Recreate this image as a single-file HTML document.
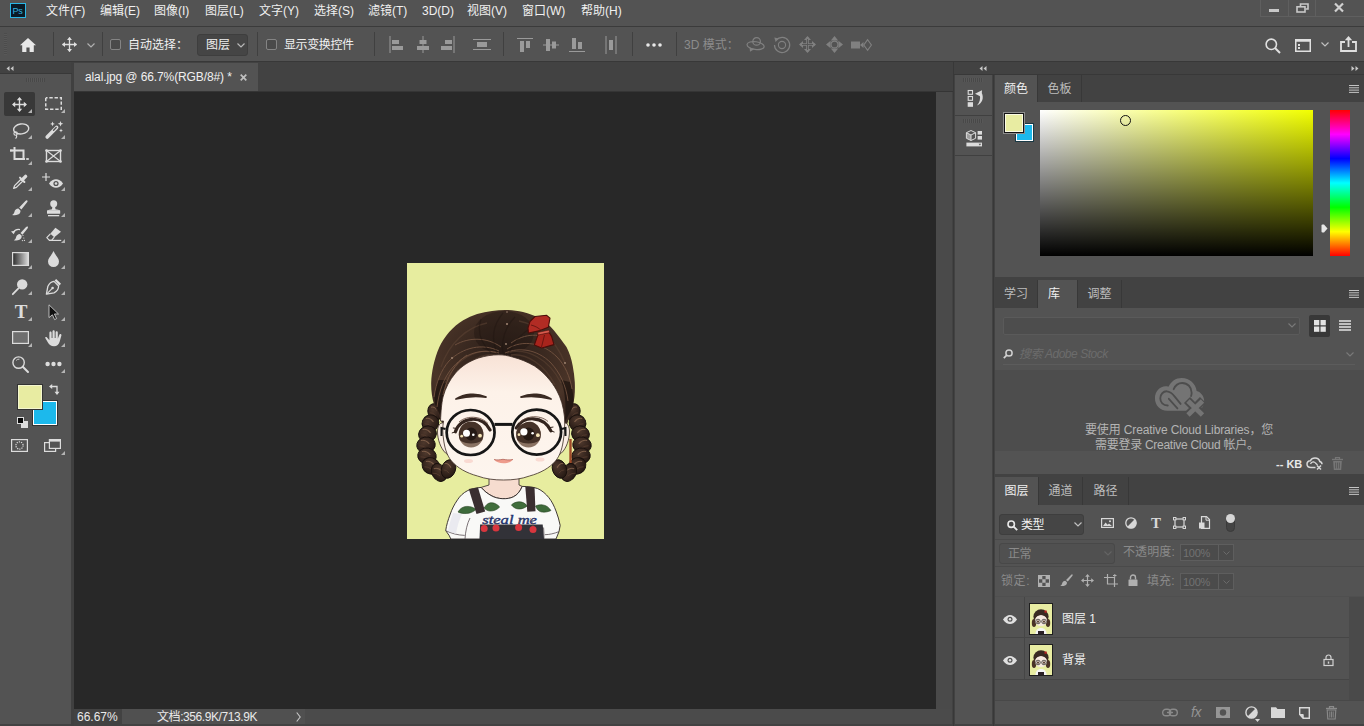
<!DOCTYPE html>
<html lang="zh">
<head>
<meta charset="utf-8">
<title>alal.jpg @ 66.7%(RGB/8#) *</title>
<style>
*{box-sizing:border-box;margin:0;padding:0}
html,body{width:1364px;height:726px;overflow:hidden;background:#424242}
body{position:relative;font-family:"Liberation Sans","Noto Sans CJK SC",sans-serif;font-size:12px;color:#e6e6e6;line-height:1}
.abs{position:absolute}
svg{position:absolute;overflow:visible}
/* menu bar */
#menubar{left:0;top:0;width:1364px;height:26px;background:#535353}
#menubar .mi{position:absolute;top:4px;font-size:12px;line-height:14px;color:#f0f0f0;white-space:nowrap}
#menuline{left:0;top:26px;width:1364px;height:1px;background:#3b3b3b}
/* options bar */
#optbar{left:0;top:27px;width:1364px;height:34px;background:#535353}
.vsep{position:absolute;width:1px;background:#404040}
.t12{position:absolute;font-size:12px;line-height:14px;white-space:nowrap}
/* tools */
#toolhead{left:0;top:62px;width:71px;height:12px;background:#424242}
#tools{left:0;top:74px;width:71px;height:650px;background:#535353}
/* doc area */
#tabbar{left:71px;top:62px;width:882px;height:30px;background:#424242;border-bottom:1px solid #353535}
#tab{left:74px;top:63px;width:184px;height:28px;background:#535353}
#canvas{left:74px;top:92px;width:862px;height:617px;background:#282828}
#vscroll{left:936px;top:92px;width:16px;height:617px;background:#4a4a4a}
#status{left:74px;top:709px;width:878px;height:15px;background:#4b4b4b}
/* right dock */
#dockhead{left:954px;top:62px;width:410px;height:12px;background:#424242}
#iconcol{left:955px;top:75px;width:37px;height:649px;background:#535353}
.panel{position:absolute;left:995px;width:369px;background:#535353}
.ptabs{position:absolute;left:995px;width:369px;height:27px;background:#424242}
.ptab{position:absolute;top:0;height:27px;font-size:12px;line-height:28px;text-align:center;color:#bdbdbd;border-right:1px solid #383838}
.ptab.on{background:#535353;color:#f0f0f0}
</style>
</head>
<body>
<!-- MENUBAR -->
<div id="menubar" class="abs">
<span class="mi" style="left:46px">文件(F)</span>
<span class="mi" style="left:100px">编辑(E)</span>
<span class="mi" style="left:154px">图像(I)</span>
<span class="mi" style="left:205px">图层(L)</span>
<span class="mi" style="left:259px">文字(Y)</span>
<span class="mi" style="left:314px">选择(S)</span>
<span class="mi" style="left:368px">滤镜(T)</span>
<span class="mi" style="left:422px">3D(D)</span>
<span class="mi" style="left:467px">视图(V)</span>
<span class="mi" style="left:522px">窗口(W)</span>
<span class="mi" style="left:581px">帮助(H)</span>
</div>

<!-- Ps logo -->
<div class="abs" style="left:10px;top:3px;width:16px;height:15px;background:#0a1a26;border:1px solid #2bb7e6"></div>
<span class="abs" style="left:12.500px;top:5.500px;font-size:9px;line-height:10px;color:#31b4e0;letter-spacing:-0.2px">Ps</span>
<!-- window controls -->
<div class="abs" style="left:1260px;top:0;width:104px;height:17px;border:1px solid #5f5f5f;border-top:0;border-right:0"></div>
<div class="abs" style="left:1288px;top:0;width:1px;height:16px;background:#5f5f5f"></div>
<div class="abs" style="left:1315px;top:0;width:1px;height:16px;background:#5f5f5f"></div>
<div class="abs" style="left:1269px;top:9px;width:10px;height:3px;background:#c8c8c8"></div>
<svg style="left:1296px;top:3px" width="13" height="10" viewBox="0 0 13 10"><path d="M4.5 3.5V1h7.5v5H9.5" fill="none" stroke="#c8c8c8" stroke-width="1.6"/><rect x="1" y="3.8" width="8" height="5.2" fill="none" stroke="#c8c8c8" stroke-width="1.6"/></svg>
<svg style="left:1334px;top:3px" width="10" height="9" viewBox="0 0 10 9"><path d="M1 0.5L9 8.5M9 0.5L1 8.5" stroke="#d0d0d0" stroke-width="2.2"/></svg>
<div id="menuline" class="abs"></div>
<!-- OPTIONS BAR -->
<div id="optbar" class="abs">
<!-- grip -->
<div class="abs" style="left:4px;top:6px;width:3px;height:22px;background:repeating-linear-gradient(#4c4c4c 0 1px,#585858 1px 2px)"></div>
<!-- home -->
<svg style="left:20px;top:11px" width="16" height="14" viewBox="0 0 16 14"><path d="M8 0L0 7.2h2.2V14h4.2V9.4h3.2V14h4.2V7.2H16z" fill="#e8e8e8"/></svg>
<div class="vsep" style="left:53px;top:5px;height:24px"></div>
<!-- move -->
<svg style="left:62px;top:10px" width="15" height="15" viewBox="0 0 15 15"><path d="M7.5 0.5v14M0.5 7.5h14" stroke="#e0e0e0" stroke-width="1.3" fill="none"/><path d="M7.5 0L5 3h5zM7.5 15L5 12h5zM0 7.5L3 5v5zM15 7.5L12 5v5z" fill="#e0e0e0"/></svg>
<svg style="left:87px;top:16px" width="8" height="5" viewBox="0 0 8 5"><path d="M0.5 0.5L4 4l3.5-3.5" fill="none" stroke="#b0b0b0" stroke-width="1.2"/></svg>
<div class="vsep" style="left:102px;top:5px;height:24px"></div>
<!-- checkbox 1 -->
<div class="abs" style="left:110px;top:12px;width:11px;height:11px;border:1px solid #848484;border-radius:2px;background:#4a4a4a"></div>
<span class="t12" style="left:128px;top:11px;color:#f0f0f0">自动选择：</span>
<!-- dropdown -->
<div class="abs" style="left:197px;top:7px;width:51px;height:22px;background:#454545;border:1px solid #3e3e3e;border-radius:3px"></div>
<span class="t12" style="left:206px;top:11px;color:#f0f0f0">图层</span>
<svg style="left:237px;top:16px" width="8" height="5" viewBox="0 0 8 5"><path d="M0.5 0.5L4 4l3.5-3.5" fill="none" stroke="#b8b8b8" stroke-width="1.2"/></svg>
<div class="vsep" style="left:257px;top:5px;height:24px"></div>
<!-- checkbox 2 -->
<div class="abs" style="left:266px;top:12px;width:11px;height:11px;border:1px solid #848484;border-radius:2px;background:#4a4a4a"></div>
<span class="t12" style="left:284px;top:11px;color:#f0f0f0;letter-spacing:-0.4px">显示变换控件</span>
<div class="vsep" style="left:374px;top:5px;height:24px"></div>
<!-- align icons -->
<svg style="left:389px;top:9px" width="16" height="18" viewBox="0 0 16 18"><path d="M1 0v17" stroke="#9a9a9a" stroke-width="1"/><rect x="3" y="4" width="7" height="4" fill="#9a9a9a"/><rect x="3" y="10" width="11" height="4" fill="#9a9a9a"/></svg>
<svg style="left:416px;top:9px" width="14" height="18" viewBox="0 0 14 18"><path d="M7 0v17" stroke="#9a9a9a" stroke-width="1"/><rect x="3.5" y="4" width="7" height="4" fill="#9a9a9a"/><rect x="1" y="10" width="12" height="4" fill="#9a9a9a"/></svg>
<svg style="left:440px;top:9px" width="16" height="18" viewBox="0 0 16 18"><path d="M14 0v17" stroke="#9a9a9a" stroke-width="1"/><rect x="5" y="4" width="7" height="4" fill="#9a9a9a"/><rect x="1" y="10" width="11" height="4" fill="#9a9a9a"/></svg>
<svg style="left:473px;top:12px" width="18" height="12" viewBox="0 0 18 12"><path d="M0 0.5h18M0 10.5h18" stroke="#9a9a9a" stroke-width="1"/><rect x="4" y="3" width="10" height="5" fill="#9a9a9a"/></svg>
<div class="vsep" style="left:503px;top:5px;height:24px"></div>
<svg style="left:517px;top:11px" width="16" height="15" viewBox="0 0 16 15"><path d="M0 0.5h16" stroke="#9a9a9a" stroke-width="1"/><rect x="3" y="3" width="4" height="11" fill="#9a9a9a"/><rect x="9" y="3" width="4" height="7" fill="#9a9a9a"/></svg>
<svg style="left:543px;top:11px" width="16" height="14" viewBox="0 0 16 14"><path d="M0 7h16" stroke="#9a9a9a" stroke-width="1"/><rect x="3" y="1" width="4" height="12" fill="#9a9a9a"/><rect x="9" y="3.5" width="4" height="7" fill="#9a9a9a"/></svg>
<svg style="left:569px;top:10px" width="16" height="15" viewBox="0 0 16 15"><path d="M0 14.5h16" stroke="#9a9a9a" stroke-width="1"/><rect x="3" y="1" width="4" height="11" fill="#9a9a9a"/><rect x="9" y="5" width="4" height="7" fill="#9a9a9a"/></svg>
<svg style="left:605px;top:9px" width="12" height="18" viewBox="0 0 12 18"><path d="M1 0v18M11 0v18" stroke="#9a9a9a" stroke-width="1"/><rect x="4" y="4" width="4" height="10" fill="#9a9a9a"/></svg>
<div class="vsep" style="left:632px;top:5px;height:24px"></div>
<svg style="left:646px;top:16px" width="16" height="4" viewBox="0 0 16 4"><circle cx="2" cy="2" r="1.8" fill="#e8e8e8"/><circle cx="8" cy="2" r="1.8" fill="#e8e8e8"/><circle cx="14" cy="2" r="1.8" fill="#e8e8e8"/></svg>
<div class="vsep" style="left:676px;top:5px;height:24px"></div>
<span class="t12" style="left:684px;top:11px;color:#8c8c8c">3D 模式：</span>
<!-- 3d icons -->
<svg style="left:746px;top:9px" width="20" height="17" viewBox="0 0 20 17"><circle cx="10.6" cy="5.4" r="3.8" fill="none" stroke="#808080" stroke-width="1.2"/><ellipse cx="9.6" cy="9.6" rx="8.6" ry="3.9" fill="none" stroke="#808080" stroke-width="1.2" transform="rotate(8 9.6 9.6)"/><path d="M3.6 11.4l5 1.6-4.600 2.800z" fill="#808080"/></svg>
<svg style="left:773px;top:9px" width="18" height="18" viewBox="0 0 18 18"><path d="M3.2 4.2A7.6 7.6 0 1 1 1.5 9" fill="none" stroke="#808080" stroke-width="1.2"/><path d="M1.3 1.5l4.5 1-3.2 3.4z" fill="#808080"/><circle cx="9" cy="9" r="3.6" fill="none" stroke="#808080" stroke-width="1.1"/></svg>
<svg style="left:799px;top:9px" width="17" height="17" viewBox="0 0 17 17"><path d="M8.5 1.5v14M1.5 8.5h14" stroke="#808080" stroke-width="2.6" fill="none"/><path d="M8.5 0L5 4h7zM8.5 17L5 13h7zM0 8.5L4 5v7zM17 8.5L13 5v7z" fill="#808080"/><path d="M8.5 3v11M3 8.5h11" stroke="#535353" stroke-width="0.9" fill="none"/></svg>
<svg style="left:825px;top:8px" width="19" height="19" viewBox="0 0 19 19"><circle cx="9.5" cy="9.5" r="3.4" fill="none" stroke="#808080" stroke-width="1.1"/><path d="M9.5 1L5.800 5.600h7.400zM9.500 18L5.800 13.400h7.400zM1 9.500L5.600 5.800v7.400zM18 9.500L13.400 5.800v7.400z" fill="#808080"/></svg>
<svg style="left:851px;top:11px" width="20" height="14" viewBox="0 0 20 14"><rect x="0" y="3.5" width="9" height="7" fill="#808080"/><path d="M9 7L12.5 4v6z" fill="#808080"/><path d="M16.600 1.600L12.800 7l3.800 5.400L20.400 7z" fill="none" stroke="#808080" stroke-width="1.1"/></svg>
<!-- right side -->
<svg style="left:1265px;top:11px" width="16" height="16" viewBox="0 0 16 16"><circle cx="6.3" cy="6.3" r="5.2" fill="none" stroke="#e0e0e0" stroke-width="1.6"/><path d="M10 10l5 5" stroke="#e0e0e0" stroke-width="2"/></svg>
<svg style="left:1295px;top:12px" width="16" height="13" viewBox="0 0 16 13"><rect x="0.75" y="0.75" width="14.5" height="11.5" fill="none" stroke="#e0e0e0" stroke-width="1.5"/><rect x="0.75" y="0.75" width="14.5" height="2" fill="#e0e0e0"/><rect x="3" y="5" width="2" height="2" fill="#e0e0e0"/><rect x="3" y="8" width="2" height="2" fill="#e0e0e0"/></svg>
<svg style="left:1321px;top:15px" width="8" height="5" viewBox="0 0 8 5"><path d="M0.5 0.5L4 4l3.5-3.5" fill="none" stroke="#c0c0c0" stroke-width="1.2"/></svg>
<svg style="left:1340px;top:9px" width="17" height="16" viewBox="0 0 17 16"><path d="M5 6H1v9h15V6h-4" fill="none" stroke="#e0e0e0" stroke-width="1.8"/><path d="M8.5 11V2.5" stroke="#e0e0e0" stroke-width="1.8"/><path d="M8.5 0L4.8 4.2h7.4z" fill="#e0e0e0"/></svg>
</div>
<!-- TOOLS -->
<div id="toolhead" class="abs"></div>
<svg style="left:6px;top:66px" width="8" height="5" viewBox="0 0 8 5"><path d="M3.500 0v5L0.500 2.500zM7.500 0v5L4.500 2.500z" fill="#c8c8c8"/></svg>
<div id="tools" class="abs"></div>
<div class="abs" style="left:26px;top:78px;width:19px;height:4px;background:repeating-linear-gradient(90deg,#484848 0 1px,#585858 1px 2px)"></div>
<div class="abs" style="left:4px;top:92px;width:31px;height:24px;background:#383838;border-radius:2px"></div>
<svg style="left:12px;top:97px" width="15" height="15" viewBox="0 0 15 15"><path d="M7.5 1v13M1 7.5h13" stroke="#dcdcdc" stroke-width="1.4" fill="none"/><path d="M7.5 0L4.8 3.2h5.4zM7.5 15L4.8 11.8h5.4zM0 7.5L3.2 4.8v5.4zM15 7.5L11.8 4.8v5.4z" fill="#dcdcdc"/></svg>
<svg style="left:28px;top:109px" width="4" height="4" viewBox="0 0 4 4"><path d="M4 0v4H0z" fill="#b4b4b4"/></svg>
<svg style="left:45px;top:97px" width="17" height="13" viewBox="0 0 17 13"><rect x="0.75" y="0.75" width="15.5" height="11.5" fill="none" stroke="#dcdcdc" stroke-width="1.5" stroke-dasharray="3.4 1.8" stroke-dashoffset="1.6"/></svg>
<svg style="left:61px;top:109px" width="4" height="4" viewBox="0 0 4 4"><path d="M4 0v4H0z" fill="#b4b4b4"/></svg>
<svg style="left:12px;top:123px" width="18" height="16" viewBox="0 0 18 16"><ellipse cx="9.2" cy="6" rx="7.6" ry="5" fill="none" stroke="#dcdcdc" stroke-width="1.4" transform="rotate(-8 9 6)"/><circle cx="3.6" cy="10.6" r="1.7" fill="none" stroke="#dcdcdc" stroke-width="1.1"/><path d="M4.2 12.2c.8 1 .4 2.4-.6 3.4" fill="none" stroke="#dcdcdc" stroke-width="1.1"/></svg>
<svg style="left:28px;top:135px" width="4" height="4" viewBox="0 0 4 4"><path d="M4 0v4H0z" fill="#b4b4b4"/></svg>
<svg style="left:45px;top:121px" width="18" height="18" viewBox="0 0 18 18"><path d="M2.2 16L11.6 6.4" stroke="#dcdcdc" stroke-width="3.6" stroke-linecap="round"/><path d="M8.6 9.2l2.6-2.6" stroke="#535353" stroke-width="1.4" stroke-linecap="round"/><path d="M7.5 0.5l.7 1.7 1.7.7-1.7.7-.7 1.7-.7-1.7-1.7-.7 1.7-.7zM15.5 0l.8 2 2 .8-2 .8-.8 2-.8-2-2-.8 2-.8zM16 7.5l.6 1.400 1.400.6-1.400.6-.6 1.400-.6-1.400-1.400-.6 1.400-.6z" fill="#dcdcdc"/></svg>
<svg style="left:61px;top:135px" width="4" height="4" viewBox="0 0 4 4"><path d="M4 0v4H0z" fill="#b4b4b4"/></svg>
<svg style="left:10px;top:147px" width="19" height="16" viewBox="0 0 19 16"><path d="M0 3.5h13.500v9.500" fill="none" stroke="#dcdcdc" stroke-width="2"/><path d="M4.500 0v12h10.500" fill="none" stroke="#dcdcdc" stroke-width="2"/><rect x="0" y="2.600" width="2.600" height="1.800" fill="#dcdcdc"/><rect x="16.200" y="11.100" width="2.600" height="1.800" fill="#dcdcdc"/></svg>
<svg style="left:28px;top:161px" width="4" height="4" viewBox="0 0 4 4"><path d="M4 0v4H0z" fill="#b4b4b4"/></svg>
<svg style="left:45px;top:149px" width="17" height="14" viewBox="0 0 17 14"><rect x="1.500" y="1.500" width="14" height="11" fill="none" stroke="#dcdcdc" stroke-width="1.400"/><path d="M1.500 1.500l14 11M15.500 1.500l-14 11" stroke="#dcdcdc" stroke-width="1.200"/><circle cx="1.500" cy="1.500" r="1.300" fill="#dcdcdc"/><circle cx="15.500" cy="1.500" r="1.300" fill="#dcdcdc"/><circle cx="1.500" cy="12.500" r="1.300" fill="#dcdcdc"/><circle cx="15.500" cy="12.500" r="1.300" fill="#dcdcdc"/></svg>
<svg style="left:12px;top:174px" width="16" height="16" viewBox="0 0 16 16"><path d="M1.600 14.400l1-2.800L9 5.200l1.800 1.800-6.400 6.400z" fill="none" stroke="#dcdcdc" stroke-width="1.300" stroke-linejoin="round"/><path d="M8 3.600l4.400 4.400" stroke="#dcdcdc" stroke-width="2" stroke-linecap="round"/><path d="M10.400 5.600L13.600 2.400" stroke="#dcdcdc" stroke-width="3.400" stroke-linecap="round"/></svg>
<svg style="left:28px;top:187px" width="4" height="4" viewBox="0 0 4 4"><path d="M4 0v4H0z" fill="#b4b4b4"/></svg>
<svg style="left:42px;top:173px" width="21" height="16" viewBox="0 0 21 16"><path d="M4 0v8M0 4h8" stroke="#dcdcdc" stroke-width="1.200"/><path d="M7 10.500c2-3 4.500-4.200 7-4.200s5 1.200 7 4.200c-2 3-4.500 4.200-7 4.200s-5-1.200-7-4.200z" fill="#dcdcdc"/><circle cx="14" cy="10.500" r="2.600" fill="#535353"/><circle cx="14" cy="10.500" r="1.300" fill="#dcdcdc"/></svg>
<svg style="left:61px;top:187px" width="4" height="4" viewBox="0 0 4 4"><path d="M4 0v4H0z" fill="#b4b4b4"/></svg>
<svg style="left:12px;top:200px" width="16" height="16" viewBox="0 0 16 16"><path d="M15.200 0.400c.6.400.5 1-.1 1.800L9.400 9.400 7.200 7.600 13.400 1c.7-.7 1.300-1 1.800-.6z" fill="#dcdcdc"/><path d="M6.400 8.600l2 1.800c.4 1.600-.6 3.400-2.400 4.200-1.800.8-4 .8-6 .4 1.400-.6 2-1.400 2.400-3 .4-1.800 2-3.400 4-3.400z" fill="#dcdcdc"/></svg>
<svg style="left:28px;top:213px" width="4" height="4" viewBox="0 0 4 4"><path d="M4 0v4H0z" fill="#b4b4b4"/></svg>
<svg style="left:47px;top:200px" width="14" height="17" viewBox="0 0 14 17"><circle cx="6.700" cy="3.800" r="3.500" fill="#dcdcdc"/><path d="M5.400 6h2.600l.5 3.200c2 .2 3.600.6 4.800 1.200H0.200c1.200-.6 2.800-1 4.800-1.200z" fill="#dcdcdc"/><rect x="0" y="10.300" width="13.200" height="3.500" rx="0.600" fill="#dcdcdc"/><rect x="1" y="15" width="11.200" height="1.300" fill="#dcdcdc"/></svg>
<svg style="left:61px;top:213px" width="4" height="4" viewBox="0 0 4 4"><path d="M4 0v4H0z" fill="#b4b4b4"/></svg>
<svg style="left:11px;top:226px" width="18" height="17" viewBox="0 0 18 17"><path d="M16.600 0.600c.6.400.5 1-.1 1.800l-5 6.400-2-1.800L14.800 1.200c.7-.7 1.300-1 1.800-.6z" fill="#dcdcdc"/><path d="M8.800 8l1.800 1.600c.4 1.600-.4 3.400-2.200 4.200-1.600.8-3.800.8-5.600.4 1.200-.6 1.800-1.400 2.200-2.800.4-1.800 2-3.400 3.800-3.400z" fill="#dcdcdc"/><path d="M2.500 6.200C4 3.800 6.400 3 9 3.600" fill="none" stroke="#dcdcdc" stroke-width="1.200"/><path d="M0 5.400l4.400-.8-1.600 3.600z" fill="#dcdcdc"/><path d="M12 9.500l.01 0M12.800 12l.01 0M13.400 14.400l.01 0M11.400 14.600l.01 0" stroke="#dcdcdc" stroke-width="1.200" stroke-linecap="round"/></svg>
<svg style="left:28px;top:239px" width="4" height="4" viewBox="0 0 4 4"><path d="M4 0v4H0z" fill="#b4b4b4"/></svg>
<svg style="left:46px;top:227px" width="17" height="15" viewBox="0 0 17 15"><path d="M9.4 0.7L15 4.7 8.300 10.200 4.300 6.800z" fill="#dcdcdc"/><path d="M4.400 6.800L0.800 10.600 3.400 13.300H5.600L8.300 10.100" fill="none" stroke="#dcdcdc" stroke-width="1.200" stroke-linejoin="round"/><path d="M3 13.400h12.200" stroke="#dcdcdc" stroke-width="1.200"/></svg>
<svg style="left:61px;top:239px" width="4" height="4" viewBox="0 0 4 4"><path d="M4 0v4H0z" fill="#b4b4b4"/></svg>
<svg style="left:12px;top:252px" width="17" height="14" viewBox="0 0 17 14"><defs><linearGradient id="gtool" x1="0" x2="1" y1="0" y2="0"><stop offset="0" stop-color="#2a2a2a"/><stop offset="1" stop-color="#dcdcdc"/></linearGradient></defs><rect x="0.600" y="0.600" width="15.800" height="12.800" fill="url(#gtool)" stroke="#dcdcdc" stroke-width="1.200"/></svg>
<svg style="left:28px;top:265px" width="4" height="4" viewBox="0 0 4 4"><path d="M4 0v4H0z" fill="#b4b4b4"/></svg>
<svg style="left:48px;top:251px" width="11" height="16" viewBox="0 0 11 16"><path d="M5.500 0C7 4 11 7 11 10.500a5.500 5.500 0 0 1-11 0C0 7 4 4 5.500 0z" fill="#dcdcdc"/></svg>
<svg style="left:61px;top:265px" width="4" height="4" viewBox="0 0 4 4"><path d="M4 0v4H0z" fill="#b4b4b4"/></svg>
<svg style="left:12px;top:279px" width="16" height="16" viewBox="0 0 16 16"><circle cx="10.200" cy="5.400" r="5.200" fill="#dcdcdc"/><path d="M6.400 9.400L0.800 15.200" stroke="#dcdcdc" stroke-width="1.800" stroke-linecap="round"/></svg>
<svg style="left:28px;top:291px" width="4" height="4" viewBox="0 0 4 4"><path d="M4 0v4H0z" fill="#b4b4b4"/></svg>
<svg style="left:45px;top:278px" width="17" height="17" viewBox="0 0 17 17"><path d="M11.200 1l4.800 4.800-1.600 1.600-4.800-4.800z" fill="#dcdcdc"/><path d="M9 3.400l4.600 4.600c0 3-1.600 5.400-4.600 6.800L1.400 16.200 2.800 8.600C4.200 5.600 6 3.600 9 3.400z" fill="none" stroke="#dcdcdc" stroke-width="1.300" stroke-linejoin="round"/><path d="M1.800 15.800l5.200-5.200" stroke="#dcdcdc" stroke-width="1.100"/><circle cx="7.600" cy="10" r="1.300" fill="#dcdcdc"/></svg>
<svg style="left:61px;top:291px" width="4" height="4" viewBox="0 0 4 4"><path d="M4 0v4H0z" fill="#b4b4b4"/></svg>
<span class="abs" style="left:13px;top:301px;width:16px;text-align:center;font-family:'Liberation Serif',serif;font-weight:bold;font-size:19px;line-height:22px;color:#dcdcdc">T</span>
<svg style="left:28px;top:317px" width="4" height="4" viewBox="0 0 4 4"><path d="M4 0v4H0z" fill="#b4b4b4"/></svg>
<svg style="left:48px;top:304px" width="12" height="16" viewBox="0 0 12 16"><path d="M1 0.800L10.500 10H6.400l2.200 4.600-2 1-2.200-4.800L1 13.600z" fill="#111" stroke="#c8c8c8" stroke-width="0.900" stroke-linejoin="round"/></svg>
<svg style="left:61px;top:317px" width="4" height="4" viewBox="0 0 4 4"><path d="M4 0v4H0z" fill="#b4b4b4"/></svg>
<svg style="left:12px;top:331px" width="17" height="13" viewBox="0 0 17 13"><rect x="0.600" y="0.600" width="15.800" height="11.800" fill="#6e6e6e" stroke="#dcdcdc" stroke-width="1.200"/></svg>
<svg style="left:28px;top:343px" width="4" height="4" viewBox="0 0 4 4"><path d="M4 0v4H0z" fill="#b4b4b4"/></svg>
<svg style="left:45px;top:330px" width="17" height="17" viewBox="0 0 17 17"><path d="M0.400 8.200C-0.200 7.200 1 6.500 1.800 7.300L4.400 10.200V2.800C4.400 1.200 6.600 1.200 6.600 2.800V8H7.500V1.400C7.500 -0.200 9.700 -0.200 9.700 1.400V8H10.600V2.400C10.600 0.800 12.800 0.800 12.800 2.400V8.800L14.300 4.800C14.900 3.400 16.900 4.200 16.400 5.600L14.700 11.500C13.900 14.500 12 16.200 9 16.200 6 16.200 4.400 14.800 3.200 13z" fill="#dcdcdc"/></svg>
<svg style="left:61px;top:343px" width="4" height="4" viewBox="0 0 4 4"><path d="M4 0v4H0z" fill="#b4b4b4"/></svg>
<svg style="left:12px;top:356px" width="17" height="17" viewBox="0 0 17 17"><circle cx="6.600" cy="6.600" r="5.700" fill="none" stroke="#dcdcdc" stroke-width="1.400"/><path d="M10.800 10.800l5.200 5.200" stroke="#dcdcdc" stroke-width="2" stroke-linecap="round"/><path d="M4.200 4.400A3.400 3.400 0 0 1 7.400 3.200" fill="none" stroke="#dcdcdc" stroke-width="0.900"/></svg>
<svg style="left:45px;top:361px" width="17" height="6" viewBox="0 0 17 6"><circle cx="2.600" cy="3" r="2.200" fill="#dcdcdc"/><circle cx="8.500" cy="3" r="2.200" fill="#dcdcdc"/><circle cx="14.400" cy="3" r="2.200" fill="#dcdcdc"/></svg>
<svg style="left:61px;top:369px" width="4" height="4" viewBox="0 0 4 4"><path d="M4 0v4H0z" fill="#b4b4b4"/></svg>
<div class="abs" style="left:33px;top:401px;width:24px;height:24px;background:#1cb9ec;border:1px solid #fff;box-shadow:0 0 0 1px #333"></div>
<div class="abs" style="left:18px;top:385px;width:24px;height:24px;background:#e8eca2;border:1px solid #f4f6cf;box-shadow:0 0 0 1px #333"></div>
<svg style="left:49px;top:384px" width="11" height="11" viewBox="0 0 11 11"><path d="M2.500 2.500h5.500v5.500" fill="none" stroke="#dcdcdc" stroke-width="1.300"/><path d="M0 2.500L3.200 0v5zM8 11L5.500 7.800h5z" fill="#dcdcdc"/></svg>
<div class="abs" style="left:21px;top:421px;width:7px;height:7px;background:#dcdcdc"></div><div class="abs" style="left:17px;top:417px;width:7px;height:7px;background:#0a0a0a;border:1px solid #dcdcdc"></div>
<svg style="left:11px;top:439px" width="17" height="13" viewBox="0 0 17 13"><rect x="0.600" y="0.600" width="15.800" height="11.800" fill="none" stroke="#dcdcdc" stroke-width="1.200"/><circle cx="8.500" cy="6.500" r="3.600" fill="none" stroke="#dcdcdc" stroke-width="1.200" stroke-dasharray="1.2 1.06" stroke-width="1.4"/></svg>
<svg style="left:44px;top:439px" width="17" height="13" viewBox="0 0 17 13"><rect x="0.600" y="3.600" width="11" height="8.800" fill="#535353" stroke="#dcdcdc" stroke-width="1.200"/><rect x="5.400" y="0.600" width="11" height="8.800" fill="#535353" stroke="#dcdcdc" stroke-width="1.200"/><rect x="5.400" y="0.600" width="11" height="2" fill="#dcdcdc"/></svg>
<svg style="left:61px;top:451px" width="4" height="4" viewBox="0 0 4 4"><path d="M4 0v4H0z" fill="#b4b4b4"/></svg>
<!-- DOC -->
<div id="tabbar" class="abs"></div>
<div id="tab" class="abs"></div>
<span class="t12" style="left:85px;top:70px;color:#f0f0f0;letter-spacing:-0.11px" id="tabtxt">alal.jpg @ 66.7%(RGB/8#) *</span>
<svg style="left:240px;top:74px" width="7" height="7" viewBox="0 0 7 7"><path d="M0.700 0.700l5.600 5.600M6.300 0.700L0.700 6.300" stroke="#c0c0c0" stroke-width="1.700"/></svg>
<div id="canvas" class="abs"></div>
<div id="vscroll" class="abs"></div>
<svg id="girl" style="left:407px;top:263px" width="197" height="276" viewBox="0 0 197 276">
<defs>
<radialGradient id="hairg" cx="0.5" cy="0.42" r="0.62"><stop offset="0" stop-color="#2a1d18"/><stop offset="0.45" stop-color="#3a2920"/><stop offset="0.8" stop-color="#4a3428"/><stop offset="1" stop-color="#3a2820"/></radialGradient>
<linearGradient id="faceg" x1="0" x2="0" y1="0" y2="1"><stop offset="0" stop-color="#f8e2d6"/><stop offset="0.3" stop-color="#fdf2e9"/><stop offset="1" stop-color="#fdf5ee"/></linearGradient>
<radialGradient id="irisg" cx="0.5" cy="0.35" r="0.7"><stop offset="0" stop-color="#3a2a22"/><stop offset="0.55" stop-color="#6a5446"/><stop offset="1" stop-color="#9a8472"/></radialGradient>
<linearGradient id="braidg" x1="0" x2="1" y1="0" y2="0"><stop offset="0" stop-color="#4a3428"/><stop offset="0.5" stop-color="#2e201a"/><stop offset="1" stop-color="#4a3226"/></linearGradient>
<radialGradient id="knotg" cx="0.4" cy="0.35" r="0.75"><stop offset="0" stop-color="#4e382c"/><stop offset="0.6" stop-color="#33231c"/><stop offset="1" stop-color="#20150f"/></radialGradient>
<clipPath id="imgclip"><rect x="0" y="0" width="197" height="276"/></clipPath>
</defs>
<g clip-path="url(#imgclip)">
<rect x="0" y="0" width="197" height="276" fill="#e7ed9f"/>
<!-- braids -->
<g id="braidL">
<ellipse cx="28" cy="149" rx="7" ry="8.5" transform="rotate(-20 28 149)" fill="url(#knotg)" stroke="#170f0c" stroke-width="0.900"/>
<path d="M24.1 144.3Q27.3 142.8 30.4 147.7" fill="none" stroke="#8a6850" stroke-width="1.100" opacity=".8"/>
<path d="M23.1 149.8Q25.9 149.3 28.7 152.8" fill="none" stroke="#5e4232" stroke-width="0.900" opacity=".8"/>
<ellipse cx="23.5" cy="160" rx="8.5" ry="8" transform="rotate(-25 23.5 160)" fill="url(#knotg)" stroke="#170f0c" stroke-width="0.900"/>
<path d="M18.8 155.6Q22.6 154.1 26.5 158.8" fill="none" stroke="#8a6850" stroke-width="1.100" opacity=".8"/>
<path d="M17.6 160.8Q21.0 160.3 24.4 163.6" fill="none" stroke="#5e4232" stroke-width="0.900" opacity=".8"/>
<ellipse cx="20.5" cy="171" rx="9" ry="8" transform="rotate(-20 20.5 171)" fill="url(#knotg)" stroke="#170f0c" stroke-width="0.900"/>
<path d="M15.6 166.6Q19.6 165.1 23.6 169.8" fill="none" stroke="#8a6850" stroke-width="1.100" opacity=".8"/>
<path d="M14.2 171.8Q17.8 171.3 21.4 174.6" fill="none" stroke="#5e4232" stroke-width="0.900" opacity=".8"/>
<ellipse cx="19" cy="182" rx="9.3" ry="8" transform="rotate(-10 19 182)" fill="url(#knotg)" stroke="#170f0c" stroke-width="0.900"/>
<path d="M13.9 177.6Q18.1 176.1 22.3 180.8" fill="none" stroke="#8a6850" stroke-width="1.100" opacity=".8"/>
<path d="M12.5 182.8Q16.2 182.3 19.9 185.6" fill="none" stroke="#5e4232" stroke-width="0.900" opacity=".8"/>
<ellipse cx="20" cy="193" rx="9.3" ry="8" transform="rotate(10 20 193)" fill="url(#knotg)" stroke="#170f0c" stroke-width="0.900"/>
<path d="M14.9 188.6Q19.1 187.1 23.3 191.8" fill="none" stroke="#8a6850" stroke-width="1.100" opacity=".8"/>
<path d="M13.5 193.8Q17.2 193.3 20.9 196.6" fill="none" stroke="#5e4232" stroke-width="0.900" opacity=".8"/>
<ellipse cx="24" cy="203" rx="9.3" ry="8" transform="rotate(30 24 203)" fill="url(#knotg)" stroke="#170f0c" stroke-width="0.900"/>
<path d="M18.9 198.6Q23.1 197.1 27.3 201.8" fill="none" stroke="#8a6850" stroke-width="1.100" opacity=".8"/>
<path d="M17.5 203.8Q21.2 203.3 24.9 206.6" fill="none" stroke="#5e4232" stroke-width="0.900" opacity=".8"/>
<ellipse cx="32" cy="209.5" rx="9.5" ry="7" transform="rotate(60 32 209.5)" fill="url(#knotg)" stroke="#170f0c" stroke-width="0.900"/>
<path d="M26.8 205.7Q31.1 204.2 35.3 208.4" fill="none" stroke="#8a6850" stroke-width="1.100" opacity=".8"/>
<path d="M25.4 210.2Q29.2 209.7 33.0 212.7" fill="none" stroke="#5e4232" stroke-width="0.900" opacity=".8"/>
<ellipse cx="41.5" cy="206" rx="7" ry="9.5" transform="rotate(20 41.5 206)" fill="url(#knotg)" stroke="#170f0c" stroke-width="0.900"/>
<path d="M37.6 200.8Q40.8 199.3 44.0 204.6" fill="none" stroke="#8a6850" stroke-width="1.100" opacity=".8"/>
<path d="M36.6 206.9Q39.4 206.4 42.2 210.3" fill="none" stroke="#5e4232" stroke-width="0.900" opacity=".8"/>
</g>
<g id="braidR">
<ellipse cx="166" cy="149" rx="7" ry="8.5" transform="rotate(20 166 149)" fill="url(#knotg)" stroke="#170f0c" stroke-width="0.900"/>
<path d="M169.8 144.3Q166.7 142.8 163.6 147.7" fill="none" stroke="#8a6850" stroke-width="1.100" opacity=".8"/>
<path d="M170.9 149.8Q168.1 149.3 165.3 152.8" fill="none" stroke="#5e4232" stroke-width="0.900" opacity=".8"/>
<ellipse cx="170.5" cy="160" rx="8.5" ry="8" transform="rotate(25 170.5 160)" fill="url(#knotg)" stroke="#170f0c" stroke-width="0.900"/>
<path d="M175.2 155.6Q171.4 154.1 167.5 158.8" fill="none" stroke="#8a6850" stroke-width="1.100" opacity=".8"/>
<path d="M176.4 160.8Q173.1 160.3 169.7 163.6" fill="none" stroke="#5e4232" stroke-width="0.900" opacity=".8"/>
<ellipse cx="173.5" cy="171" rx="9" ry="8" transform="rotate(20 173.5 171)" fill="url(#knotg)" stroke="#170f0c" stroke-width="0.900"/>
<path d="M178.4 166.6Q174.4 165.1 170.3 169.8" fill="none" stroke="#8a6850" stroke-width="1.100" opacity=".8"/>
<path d="M179.8 171.8Q176.2 171.3 172.6 174.6" fill="none" stroke="#5e4232" stroke-width="0.900" opacity=".8"/>
<ellipse cx="175" cy="182" rx="9.3" ry="8" transform="rotate(10 175 182)" fill="url(#knotg)" stroke="#170f0c" stroke-width="0.900"/>
<path d="M180.1 177.6Q175.9 176.1 171.7 180.8" fill="none" stroke="#8a6850" stroke-width="1.100" opacity=".8"/>
<path d="M181.5 182.8Q177.8 182.3 174.1 185.6" fill="none" stroke="#5e4232" stroke-width="0.900" opacity=".8"/>
<ellipse cx="174" cy="193" rx="9.3" ry="8" transform="rotate(-10 174 193)" fill="url(#knotg)" stroke="#170f0c" stroke-width="0.900"/>
<path d="M179.1 188.6Q174.9 187.1 170.7 191.8" fill="none" stroke="#8a6850" stroke-width="1.100" opacity=".8"/>
<path d="M180.5 193.8Q176.8 193.3 173.1 196.6" fill="none" stroke="#5e4232" stroke-width="0.900" opacity=".8"/>
<ellipse cx="170" cy="203" rx="9.3" ry="8" transform="rotate(-30 170 203)" fill="url(#knotg)" stroke="#170f0c" stroke-width="0.900"/>
<path d="M175.1 198.6Q170.9 197.1 166.7 201.8" fill="none" stroke="#8a6850" stroke-width="1.100" opacity=".8"/>
<path d="M176.5 203.8Q172.8 203.3 169.1 206.6" fill="none" stroke="#5e4232" stroke-width="0.900" opacity=".8"/>
<ellipse cx="162" cy="209.5" rx="9.5" ry="7" transform="rotate(-60 162 209.5)" fill="url(#knotg)" stroke="#170f0c" stroke-width="0.900"/>
<path d="M167.2 205.7Q162.9 204.2 158.7 208.4" fill="none" stroke="#8a6850" stroke-width="1.100" opacity=".8"/>
<path d="M168.7 210.2Q164.9 209.7 161.1 212.7" fill="none" stroke="#5e4232" stroke-width="0.900" opacity=".8"/>
<ellipse cx="152.5" cy="206" rx="7" ry="9.5" transform="rotate(-20 152.5 206)" fill="url(#knotg)" stroke="#170f0c" stroke-width="0.900"/>
<path d="M156.3 200.8Q153.2 199.3 150.1 204.6" fill="none" stroke="#8a6850" stroke-width="1.100" opacity=".8"/>
<path d="M157.4 206.9Q154.6 206.4 151.8 210.3" fill="none" stroke="#5e4232" stroke-width="0.900" opacity=".8"/>
<path d="M163.500 176v24" stroke="#a04a28" stroke-width="2.400"/>
</g>
<!-- hair dome -->
<path d="M24.200 119.200C24.500 110 27 96 32.400 84.100 37 74 46 63 56.200 57.200 65 52 75 49 85 48c5-.8 10-1.200 14.600-1.100 6 .1 11 .8 16.400 2.100 6 1.500 11.500 3.500 16.600 6.200 5.500 3 10.500 7.500 14.400 12.400 4.500 5.500 8.500 11 12.500 16.500 3 6 5 12 6.200 18.600 1 5.500 1.800 11 2.100 16.500.3 8 0 16-2 24l-6 19H36l-9-21c-2-7-3-14-2.800-22z" fill="url(#hairg)"/>
<path d="M40 117c-3 8-4.500 18-4.500 28 0 6 .5 11 1.500 16l-9-20c-1-8 0-16 3-24z" fill="#1c130f" opacity=".75"/>
<path d="M154 117c3 8 4.500 18 4.500 28 0 6-.5 11-1.500 16l9-18c1-8 0-16-3-24z" fill="#1c130f" opacity=".75"/>
<ellipse cx="97" cy="70" rx="30" ry="22" fill="#1a120e" opacity=".35"/>
<g fill="none" stroke="#5e4434" stroke-width="1.300" opacity=".55">
<path d="M90 90C70 84 48 96 38 120"/><path d="M88 92C72 90 54 102 46 124"/><path d="M100 90c20-6 42 6 54 30"/><path d="M104 92c16-2 34 10 44 30"/><path d="M80 60c-20 4-38 20-46 44"/><path d="M112 58c20 4 36 18 46 42"/>
</g>
<!-- hair strands -->
<g fill="none" stroke="#7a5844" stroke-width="1" opacity=".8">
<path d="M92 90C78 86 60 88 46 104c-9 10-14 24-16 40"/><path d="M92 88C76 80 56 84 42 98c-8 9-13 22-15 36"/><path d="M94 84c-14-10-32-10-46-2"/><path d="M60 92c-12 8-20 22-24 40"/>
<path d="M98 90c14-6 32-4 46 10 9 10 15 22 17 38"/><path d="M100 86c16-10 36-6 50 8 8 8 13 20 15 32"/><path d="M104 80c14-10 30-10 42-2"/>
</g>
<g fill="none" stroke="#1e1410" stroke-width="1.200" opacity=".4">
<path d="M90 90c-6-14-4-28 6-40"/><path d="M96 90c-2-12 2-26 12-36"/><path d="M84 90c-10-10-14-22-10-34"/><path d="M102 90c4-10 12-20 24-26"/>
</g>
<g fill="#b89a84" opacity=".85"><circle cx="100" cy="61" r="1"/><circle cx="99" cy="81" r="0.900"/><circle cx="45" cy="95" r="0.900"/><circle cx="158" cy="100" r="0.900"/><circle cx="100" cy="49" r="0.800"/></g>
<!-- ears -->
<path d="M39 161c-5.500-3.500-9.200 1.500-8.400 10 .8 8.500 4.400 17 9.900 20.500z" fill="#fbeee4" stroke="#3a2a22" stroke-width="0.800"/>
<path d="M154 161c5.500-3.500 9.200 1.500 8.400 10-.8 8.500-4.400 17-9.900 20.500z" fill="#fbeee4" stroke="#3a2a22" stroke-width="0.800"/>
<!-- neck -->
<path d="M82 210h30v12l3.200 1.400c-2 5-5 8.500-8.800 10.400-3.200 1.600-6.800 2-10.700 1.900-4-.2-8-1-11.700-3.200-3.500-2-6.800-4.500-9.900-8.100L82 222z" fill="#f6dccf" stroke="#2e2626" stroke-width="0.800"/>
<!-- face -->
<path d="M36.500 158c-1 6-1 12 0 18 1 8 3 16 8 22 6 7 15 12 26 15 8 3 17 4 26 4s18-1 26-4c11-3 20-8 26-15 5-6 7-14 8-22 1-6 1.500-14 1-22-1-10-3.500-19-8-27-5-9-13-18-22-24-7-4-14-7-22-9-5-1.500-9-2.200-14-2.200-6 0-13 1-20 3.200-9 3-17 8-23 15-6 7-10 15-12.500 24-1.500 7-2 14-2.500 24z" fill="url(#faceg)" stroke="#3a2a22" stroke-width="0.800"/>
<!-- blush -->
<ellipse cx="61.500" cy="198" rx="4.500" ry="2" fill="#f6cfc6" opacity=".7"/><ellipse cx="133" cy="196.500" rx="4.500" ry="2" fill="#f6cfc6" opacity=".7"/>
<!-- eyebrows -->
<path d="M49 136c8-5 20-6.500 30-2-10-1.500-21-0.500-30 2z" fill="#3a2a22" stroke="#3a2a22" stroke-width="1.800" stroke-linejoin="round"/>
<path d="M144 136c-8-5-20-6.500-30-2 10-1.500 21-0.500 30 2z" fill="#3a2a22" stroke="#3a2a22" stroke-width="1.800" stroke-linejoin="round"/>
<!-- eyes -->
<g id="eyeL">
<ellipse cx="64.100" cy="171.500" rx="12.300" ry="13" fill="#8a7262"/>
<path d="M51.800 171.500a12.300 13 0 0 1 24.600 0c0 2-.4 4-1.200 5.800-3 2.200-7 3.200-11.100 3.200s-8.100-1-11.100-3.200c-.8-1.800-1.200-3.800-1.200-5.800z" fill="#453228"/>
<ellipse cx="64.100" cy="171" rx="6" ry="6.500" fill="#241914"/>
<path d="M46 158h38v9c-3-5-9-8.500-19-8.500-8 0-14 4-17 10z" fill="#fdf3ea"/>
<path d="M48.400 168.800c2-6.500 8-12 16.400-12.500 8-.4 14.500 3.600 18.300 10.600" fill="none" stroke="#33241e" stroke-width="3.200" stroke-linecap="round"/>
<path d="M52 159c4-3.500 10-5.500 17-4.500 5 .7 9 3 12 6" fill="none" stroke="#6a5044" stroke-width="0.900"/>
<path d="M48.400 168.800l-3.600 1.200M49.500 165.500l-3.600-.6" stroke="#33241e" stroke-width="1"/>
<circle cx="59.500" cy="170.300" r="3.500" fill="#fff"/><circle cx="66.300" cy="171.700" r="1.300" fill="#fff"/><circle cx="73" cy="172.700" r="1.900" fill="#f6e6b8"/><circle cx="54.700" cy="173.200" r="1.400" fill="#f6e6b8"/>
</g>
<g id="eyeR">
<ellipse cx="121.500" cy="171.500" rx="12.300" ry="13" fill="#8a7262"/>
<path d="M109.200 171.500a12.300 13 0 0 1 24.600 0c0 2-.4 4-1.200 5.800-3 2.200-7 3.200-11.100 3.200s-8.100-1-11.100-3.200c-.8-1.800-1.200-3.800-1.200-5.800z" fill="#453228"/>
<ellipse cx="121.500" cy="171" rx="6" ry="6.500" fill="#241914"/>
<path d="M102 158h44v10c-3-6-9-10-17.500-10-10 0-16 3.500-19 8.500z" fill="#fdf3ea"/>
<path d="M109.200 165c3.800-6 10-9.600 17-9.200 8.400.5 14.700 5.600 17.700 12.100" fill="none" stroke="#33241e" stroke-width="3.200" stroke-linecap="round"/>
<path d="M112 160c3-3 7-5.300 12-6 7-1 13 1 17 4.500" fill="none" stroke="#6a5044" stroke-width="0.900"/>
<path d="M143.900 167.900l3.600 1.200M142.800 164.600l3.600-.6" stroke="#33241e" stroke-width="1"/>
<circle cx="116.900" cy="168.800" r="3.600" fill="#fff"/><circle cx="125.600" cy="170.300" r="1.300" fill="#fff"/><circle cx="130.900" cy="172.200" r="1.900" fill="#f6e6b8"/><circle cx="112" cy="171.700" r="1.400" fill="#f6e6b8"/>
</g>
<!-- glasses -->
<ellipse cx="63.600" cy="169.500" rx="23.950" ry="22.500" fill="none" stroke="#161616" stroke-width="2.700"/>
<ellipse cx="129.700" cy="169.100" rx="24.400" ry="22.500" fill="none" stroke="#161616" stroke-width="2.700"/>
<path d="M87.500 161.400h18" stroke="#161616" stroke-width="3"/>
<path d="M38.500 166l-4-1v8" fill="none" stroke="#161616" stroke-width="2"/><path d="M154.500 166l4-1v8" fill="none" stroke="#161616" stroke-width="2"/>
<!-- mouth -->
<path d="M87 196.500c3 .8 6 .2 9-.2 3 .4 6 1 10 .2-2 2.600-5.500 3.800-9.500 3.800S89 199 87 196.500z" fill="#ee9c8c"/>
<path d="M87 196.500c3 .8 6 .2 9-.2 3 .4 6 1 10 .2" fill="none" stroke="#a8584c" stroke-width="0.700"/>
<!-- bow -->
<path d="M123 58.500L128 53.500 139.700 52.300 143 55.200 141.300 64.300 133 67.600 121.500 70 121 65z" fill="#b22c24" stroke="#4a0e0a" stroke-width="1.100" stroke-linejoin="round"/>
<path d="M131.400 70.900L142 69.200 144.600 73.400 147 81.600 134.700 85 127.300 82 129.800 75z" fill="#a8241c" stroke="#4a0e0a" stroke-width="1.100" stroke-linejoin="round"/>
<path d="M124 62c4 1 8 3 10 5.500M134.500 84l3-12" fill="none" stroke="#5a120e" stroke-width="0.800"/>
<path d="M130.500 69.500l11.500-2.500.8 2.600-11.600 2.400z" fill="#d85a4c" stroke="#4a0e0a" stroke-width="0.600"/>
<!-- shirt -->
<path d="M74 224.400C68 225 64 226 60.800 227.500 56 230 53 233 50.500 236.800 47 242 45 246 43.300 251 41 257 39.500 262 38.700 267.600l3.600 5.100 1.500 3.300h105.200l3-7.400 1.200-6.200c-1-5-2.400-9.800-4.200-14.400-1.800-4.800-4-9.400-7.100-13.300-3-3.800-6.600-7-11.300-9.200-4.600-1.400-9.800-2-15.400-2.100-2 5-5 8.500-8.800 10.400-3.200 1.600-6.800 2-10.700 1.900-4-.2-8-1-11.700-3.200-3.500-2-6.800-4.500-9.900-8.100z" fill="#f9f9f7" stroke="#2e2626" stroke-width="0.900" stroke-linejoin="round"/>
<path d="M38.700 267.600c6 3 12 4.500 19 4.800M152 268.600c-5 2-9.500 3-14.200 3.100M58 276c.5-8 2-15 5-21M137 276c0-4-.2-8-.4-11.500" fill="none" stroke="#5a5056" stroke-width="0.800"/>
<path d="M46 250c-2 6-4 12-5 18l8 3c1-7 3-14 6-20z" fill="#e6e6ee" opacity=".8"/>
<!-- leaves -->
<path d="M51 249c2-3.500 5-5.400 8.800-5.600 3.600-.2 6.800 1 9.200 3.100-2.600 2.400-6 3.800-9.600 4-3.200.2-6-.3-8.400-1.500z" fill="#3d6a3a" stroke="#24401f" stroke-width="0.600"/>
<path d="M77.200 245c1.600-3 3.600-4.800 6.200-5.200 3.600-.5 6.800 1.400 9.200 4.200-2.400 2.600-5.600 4-9.200 4-2.400 0-4.500-1-6.200-3z" fill="#416e3c" stroke="#24401f" stroke-width="0.600"/>
<path d="M104.400 241.900c2.200-2 4.800-3 7.700-3.100 3.200-.1 6 1.400 8.200 4.100-2.400 2-5.200 3.100-8.300 3.100-2.900 0-5.500-1.400-7.600-4.100z" fill="#416e3c" stroke="#24401f" stroke-width="0.600"/>
<path d="M128.500 243c2.200-1 4.600-1.400 7.200-1.100 3.400.4 6.200 2.400 8.200 5.600-2.800 1.400-5.900 1.900-9.200 1.500-2.400-.3-4.600-2.200-6.200-6z" fill="#3d6a3a" stroke="#24401f" stroke-width="0.600"/>
<!-- straps -->
<path d="M61.800 226l9.200-1.600 7.200 24.200-8.700 2.400z" fill="#3a2e30"/>
<path d="M118.300 223.500l9.200.4 1 24.300-8.200.6z" fill="#3a2e30"/>
<!-- text on shirt -->
<text x="75.200" y="261" font-family="Liberation Serif,serif" font-style="italic" font-weight="normal" font-size="11.500" fill="#1f336e" stroke="#1f336e" stroke-width="0.350" textLength="54.800" lengthAdjust="spacingAndGlyphs">steal me</text>
<!-- bib -->
<path d="M73.100 261.400h62.600l1.300 14.600H72.500z" fill="#323238"/>
<circle cx="77.200" cy="265.500" r="3.500" fill="#d8363e"/><circle cx="89" cy="265" r="3.500" fill="#d8363e"/><circle cx="111.600" cy="264.500" r="3.500" fill="#d8363e"/><circle cx="126" cy="266.500" r="3.500" fill="#d8363e"/>
<path d="M77.200 262c1-4 3-7 6-8M89 261.500c0-3-1-5-3-7M111.600 261c1-3 3-5 5-6M126 263c0-3-1-6-3-8" fill="none" stroke="#8a6a50" stroke-width="0.600"/>
</g>
</svg>
<div id="status" class="abs"></div>
<div class="abs" style="left:74px;top:709px;width:48px;height:15px;background:#424242"></div>
<div class="abs" style="left:122px;top:709px;width:183px;height:15px;background:#505050"></div>
<span class="t12" style="left:77px;top:710px;color:#eaeaea" id="zoomtxt">66.67%</span>
<span class="t12" style="left:157px;top:710px;color:#eaeaea;letter-spacing:-0.42px" id="doctxt">文档:356.9K/713.9K</span>
<svg style="left:296px;top:712px" width="5" height="10" viewBox="0 0 5 10"><path d="M0.700 0.500L4.200 5 0.700 9.500" fill="none" stroke="#c8c8c8" stroke-width="1.100"/></svg>
<!-- DOCK -->
<div id="dockhead" class="abs"></div>
<svg style="left:979px;top:66px" width="8" height="5" viewBox="0 0 8 5"><path d="M3.500 0v5L0.500 2.500zM7.500 0v5L4.500 2.500z" fill="#c8c8c8"/></svg>
<svg style="left:1351px;top:66px" width="8" height="5" viewBox="0 0 8 5"><path d="M0.500 0v5L3.500 2.500zM4.500 0v5L7.500 2.500z" fill="#c8c8c8"/></svg>
<div id="iconcol" class="abs"></div>
<div class="abs" style="left:963px;top:78px;width:20px;height:4px;background:repeating-linear-gradient(90deg,#484848 0 1px,#585858 1px 2px)"></div>
<!-- history icon -->
<svg style="left:967px;top:90px" width="17" height="17" viewBox="0 0 17 17"><rect x="1.200" y="0.500" width="4.300" height="3.800" fill="none" stroke="#dcdcdc" stroke-width="1.100"/><rect x="1.200" y="6.500" width="4.300" height="3.800" fill="none" stroke="#dcdcdc" stroke-width="1.100"/><rect x="0.700" y="12.200" width="5.300" height="4.600" fill="#dcdcdc"/><path d="M8 3.800L15 0.200 14.600 7z" fill="#dcdcdc"/><path d="M14.800 3C17 8 15.500 13 10 15.600 12.800 12.400 13.600 8.600 12.800 5z" fill="#dcdcdc"/></svg>
<div class="abs" style="left:955px;top:115px;width:37px;height:1px;background:#404040"></div>
<div class="abs" style="left:963px;top:119px;width:20px;height:4px;background:repeating-linear-gradient(90deg,#484848 0 1px,#585858 1px 2px)"></div>
<!-- 3d props icon -->
<svg style="left:966px;top:130px" width="17" height="17" viewBox="0 0 17 17"><path d="M5 0.500L9.600 2.700V8.300L5 10.500 0.400 8.300V2.700z" fill="none" stroke="#dcdcdc" stroke-width="1"/><path d="M0.400 2.700L5 5l4.600-2.300M5 5v5.500" fill="none" stroke="#dcdcdc" stroke-width="1"/><path d="M0.400 2.700L5 5v5.500L0.400 8.300z" fill="#dcdcdc" opacity=".55"/><rect x="11.600" y="1" width="4.400" height="3.600" fill="#dcdcdc"/><rect x="11.600" y="6" width="4.400" height="3.600" fill="#dcdcdc"/><rect x="0.400" y="12.600" width="15.600" height="3.800" fill="#dcdcdc"/><path d="M12.600 13.800h2.600l-1.300 1.800z" fill="#535353"/></svg>
<div class="abs" style="left:955px;top:155px;width:37px;height:1px;background:#404040"></div>
<!-- COLOR PANEL -->
<div class="ptabs" style="top:75px"><div class="ptab on" style="left:0;width:43px">颜色</div><div class="ptab" style="left:43px;width:44px">色板</div></div>
<svg style="left:1349px;top:85px" width="10" height="8" viewBox="0 0 10 8"><path d="M0 0.500h10M0 2.800h10M0 5.100h10M0 7.400h10" stroke="#c4c4c4" stroke-width="1"/></svg>
<div class="panel" style="top:102px;height:175px"></div>
<div class="abs" style="left:1015px;top:123px;width:19px;height:19px;background:#1cb9ec;box-shadow:inset 0 0 0 1px #1a3a46,inset 0 0 0 2px #fff"></div>
<div class="abs" style="left:1003px;top:112px;width:22px;height:22px;background:#e8eca2;box-shadow:inset 0 0 0 1px #8e8e8e,inset 0 0 0 2px #151515,inset 0 0 0 3px #fbfbe4"></div>
<div class="abs" style="left:1040px;top:110px;width:273px;height:146px;background:linear-gradient(to bottom,rgba(0,0,0,0),#000),linear-gradient(to right,#fff,#f2ff00)"></div>
<div class="abs" style="left:1120px;top:115px;width:11px;height:11px;border:1.300px solid #111;border-radius:50%"></div>
<div class="abs" style="left:1330px;top:110px;width:20px;height:146px;background:linear-gradient(to bottom,#f00 0%,#f0f 16.660%,#00f 33.330%,#0ff 50%,#0f0 66.660%,#ff0 83.330%,#f00 100%)"></div>
<svg style="left:1321px;top:224px" width="7" height="9" viewBox="0 0 7 9"><path d="M0.500 1.500Q0.500 0.500 1.500 0.500H3L6.500 4.500 3 8.500H1.500Q0.500 8.500 0.500 7.500z" fill="#e8e8e8"/></svg>
<div class="abs" style="left:0;top:61px;width:1364px;height:1px;background:#383838"></div>
<div class="abs" style="left:953px;top:62px;width:1px;height:664px;background:#383838"></div>
<div class="abs" style="left:993px;top:74px;width:1px;height:652px;background:#383838"></div>
<div class="abs" style="left:953px;top:74px;width:411px;height:1px;background:#383838"></div>
<div class="abs" style="left:71px;top:62px;width:3px;height:664px;background:#404040"></div>
<div class="abs" style="left:0;top:73px;width:72px;height:1px;background:#383838"></div>
<!-- LIBRARIES PANEL -->
<div class="ptabs" style="top:280px;height:28px"><div class="ptab" style="left:0;width:43px;height:28px">学习</div><div class="ptab on" style="left:43px;width:40px;height:28px;text-align:left;padding-left:10px">库</div><div class="ptab" style="left:83px;width:44px;height:28px">调整</div></div>
<svg style="left:1349px;top:290px" width="10" height="8" viewBox="0 0 10 8"><path d="M0 0.500h10M0 2.800h10M0 5.100h10M0 7.400h10" stroke="#c4c4c4" stroke-width="1"/></svg>
<div class="panel" style="top:308px;height:166px"></div>
<div class="abs" style="left:1003px;top:317px;width:297px;height:18px;background:#4d4d4d;border:1px solid #5a5a5a;border-radius:2px"></div>
<svg style="left:1288px;top:323px" width="8" height="5" viewBox="0 0 8 5"><path d="M0.500 0.500L4 4l3.500-3.500" fill="none" stroke="#7a7a7a" stroke-width="1.100"/></svg>
<div class="abs" style="left:1309px;top:315px;width:21px;height:22px;background:#383838;border-radius:2px"></div>
<svg style="left:1314px;top:320px" width="12" height="12" viewBox="0 0 12 12"><rect x="0" y="0" width="5.300" height="5.300" fill="#e4e4e4"/><rect x="6.500" y="0" width="5.300" height="5.300" fill="#e4e4e4"/><rect x="0" y="6.500" width="5.300" height="5.300" fill="#e4e4e4"/><rect x="6.500" y="6.500" width="5.300" height="5.300" fill="#e4e4e4"/></svg>
<svg style="left:1339px;top:320px" width="12" height="11" viewBox="0 0 12 11"><path d="M0 1h12M0 4h12M0 7h12M0 10h12" stroke="#e4e4e4" stroke-width="1.700"/></svg>
<svg style="left:1003px;top:349px" width="10" height="10" viewBox="0 0 10 10"><circle cx="6" cy="4" r="3.100" fill="none" stroke="#d0d0d0" stroke-width="1.500"/><path d="M3.800 6.200L0.800 9.200" stroke="#d0d0d0" stroke-width="1.700"/></svg>
<span class="t12" style="left:1019px;top:347px;color:#6c6c6c;font-style:italic;letter-spacing:-0.47px" id="stocktxt">搜索 Adobe Stock</span>
<svg style="left:1346px;top:352px" width="8" height="5" viewBox="0 0 8 5"><path d="M0.500 0.500L4 4l3.500-3.500" fill="none" stroke="#7a7a7a" stroke-width="1.100"/></svg>
<div class="abs" style="left:1003px;top:364px;width:352px;height:1px;background:#5c5c5c"></div>
<div class="abs" style="left:995px;top:370px;width:369px;height:81px;background:#4d4d4d"></div>
<!-- cloud icon -->
<svg style="left:1155px;top:378px" width="50" height="38" viewBox="0 0 50 38"><g transform="translate(-2.200,-1.800) scale(1.070,1.130)"><path d="M13.500 30.500C6.500 30.500 2 25.500 2 19.500 2 13.500 6.500 9 12 9c1 0 1.800.1 2.600.3C17 4.500 21.500 1.500 27 1.500c7.500 0 13 5 14 11.500 4 1 7 4.600 7 9 0 2-.6 3.800-1.600 5.400L40 30.500z" fill="#747474"/><path d="M14 26C9.500 26 7 23 7 19.500 7 16 9.800 13.200 13.200 13.400c3.400.2 5.300 2.200 7.300 4.600l5.500 6.500" fill="none" stroke="#4d4d4d" stroke-width="1.700" stroke-linecap="round"/><path d="M19.500 11.500C21 8 24 6 27.500 6c5 0 8.800 3.800 8.800 8.600 0 1-.2 2-.5 2.900" fill="none" stroke="#4d4d4d" stroke-width="1.700" stroke-linecap="round"/><path d="M15 20l8 8.500" stroke="#4d4d4d" stroke-width="1.700" stroke-linecap="round"/></g><path d="M32 22l16 16M48 22L32 38" stroke="#4d4d4d" stroke-width="8.500"/><path d="M33 23l14.500 14M47.500 23L33 37" stroke="#747474" stroke-width="4.800"/></svg>
<span class="t12" style="left:1085px;top:423px;color:#b4b4b4;letter-spacing:-0.13px" id="lib1">要使用 Creative Cloud Libraries，您</span>
<span class="t12" style="left:1095px;top:438px;color:#b4b4b4;letter-spacing:-0.28px" id="lib2">需要登录 Creative Cloud 帐户。</span>
<div class="abs" style="left:995px;top:451px;width:369px;height:23px;background:#535353"></div>
<span class="t12" style="left:1276px;top:457px;color:#e8e8e8;font-weight:bold;font-size:11px" id="kbtxt">-- KB</span>
<svg style="left:1306px;top:457px" width="16" height="13" viewBox="0 0 16 13"><path d="M5 10.500C2.500 10.500 1 9 1 7c0-2 1.600-3.400 3.400-3.200C5.200 2 7 1 9 1c2.500 0 4.300 1.500 4.800 3.500 1.400.3 2.200 1.300 2.200 2.700" fill="none" stroke="#d8d8d8" stroke-width="1.500"/><path d="M5 10.500h4.500" stroke="#d8d8d8" stroke-width="1.500"/><path d="M4.500 7c.5-1.500 2-2.400 3.500-2 .9.300 1.500.8 2 1.500L11.500 8" fill="none" stroke="#d8d8d8" stroke-width="1.300"/><path d="M11 8.500l4 4M15 8.500l-4 4" stroke="#d8d8d8" stroke-width="1.500"/></svg>
<svg style="left:1332px;top:457px" width="11" height="13" viewBox="0 0 11 13"><path d="M0 2.500h11" stroke="#767676" stroke-width="1.400"/><path d="M3.500 2V0.600h4V2" fill="none" stroke="#767676" stroke-width="1.200"/><path d="M1.200 4h8.600l-.6 9H1.800z" fill="#767676"/><path d="M3.600 5.500v6M5.500 5.500v6M7.400 5.500v6" stroke="#535353" stroke-width="0.800"/></svg>
<!-- LAYERS PANEL -->
<div class="ptabs" style="top:477px;height:28px"><div class="ptab on" style="left:0;width:44px;height:28px">图层</div><div class="ptab" style="left:44px;width:44px;height:28px">通道</div><div class="ptab" style="left:88px;width:46px;height:28px">路径</div></div>
<svg style="left:1349px;top:487px" width="10" height="8" viewBox="0 0 10 8"><path d="M0 0.500h10M0 2.800h10M0 5.100h10M0 7.400h10" stroke="#c4c4c4" stroke-width="1"/></svg>
<div class="panel" style="top:505px;height:219px"></div>
<!-- filter row -->
<div class="abs" style="left:999px;top:514px;width:85px;height:21px;background:#454545;border:1px solid #3e3e3e;border-radius:3px"></div>
<svg style="left:1007px;top:520px" width="11" height="11" viewBox="0 0 11 11"><circle cx="4.200" cy="4.200" r="3.200" fill="none" stroke="#e8e8e8" stroke-width="1.600"/><path d="M6.600 6.600l3.600 3.600" stroke="#e8e8e8" stroke-width="1.900"/></svg>
<span class="t12" style="left:1021px;top:518px;color:#f0f0f0;letter-spacing:-0.5px">类型</span>
<svg style="left:1074px;top:522px" width="8" height="5" viewBox="0 0 8 5"><path d="M0.500 0.500L4 4l3.500-3.500" fill="none" stroke="#c0c0c0" stroke-width="1.200"/></svg>
<svg style="left:1101px;top:518px" width="13" height="10" viewBox="0 0 13 10"><rect x="0.600" y="0.600" width="11.800" height="8.800" fill="none" stroke="#d8d8d8" stroke-width="1.200"/><path d="M2 8l2.600-3.400 2 2.200 1.400-1.200L11 8z" fill="#d8d8d8"/><circle cx="9" cy="3.200" r="1" fill="#d8d8d8"/></svg>
<svg style="left:1125px;top:517px" width="12" height="12" viewBox="0 0 12 12"><circle cx="6" cy="6" r="5.200" fill="none" stroke="#d8d8d8" stroke-width="1.300"/><path d="M2.300 9.700A5.200 5.200 0 0 0 9.700 2.300z" fill="#d8d8d8"/></svg>
<span class="abs" style="left:1150px;top:513px;width:12px;text-align:center;font-family:'Liberation Serif',serif;font-weight:bold;font-size:15px;line-height:20px;color:#d8d8d8">T</span>
<svg style="left:1173px;top:517px" width="13" height="12" viewBox="0 0 13 12"><rect x="2" y="2" width="9" height="8" fill="none" stroke="#d8d8d8" stroke-width="1.200"/><rect x="0" y="0" width="3.400" height="3.400" fill="#d8d8d8"/><rect x="9.600" y="0" width="3.400" height="3.400" fill="#d8d8d8"/><rect x="0" y="8.600" width="3.400" height="3.400" fill="#d8d8d8"/><rect x="9.600" y="8.600" width="3.400" height="3.400" fill="#d8d8d8"/><rect x="1" y="1" width="1.400" height="1.400" fill="#535353"/><rect x="10.600" y="1" width="1.400" height="1.400" fill="#535353"/><rect x="1" y="9.600" width="1.400" height="1.400" fill="#535353"/><rect x="10.600" y="9.600" width="1.400" height="1.400" fill="#535353"/></svg>
<svg style="left:1199px;top:516px" width="11" height="13" viewBox="0 0 11 13"><path d="M2.500 0.600h5l3 3v8.800h-8z" fill="none" stroke="#d8d8d8" stroke-width="1.200"/><path d="M7 0.600v3.600h3.400" fill="none" stroke="#d8d8d8" stroke-width="1"/><rect x="0" y="6.500" width="5.500" height="6" fill="#d8d8d8"/></svg>
<div class="abs" style="left:1226px;top:515px;width:9px;height:17px;border-radius:4.500px;background:#444;border:1px solid #3a3a3a"></div>
<div class="abs" style="left:1226px;top:514px;width:9px;height:9px;border-radius:50%;background:#d6d6d6"></div>
<div class="abs" style="left:995px;top:539px;width:369px;height:1px;background:#4a4a4a"></div>
<!-- blend row -->
<div class="abs" style="left:999px;top:543px;width:116px;height:21px;background:#505050;border:1px solid #484848;border-radius:3px"></div>
<span class="t12" style="left:1008px;top:547px;color:#8a8a8a;letter-spacing:-0.6px">正常</span>
<svg style="left:1104px;top:551px" width="8" height="5" viewBox="0 0 8 5"><path d="M0.500 0.500L4 4l3.500-3.500" fill="none" stroke="#646464" stroke-width="1.100"/></svg>
<span class="t12" style="left:1123px;top:545px;color:#8a8a8a;letter-spacing:0.1px" id="optxt">不透明度:</span>
<div class="abs" style="left:1180px;top:544px;width:39px;height:17px;background:#4b4b4b;border:1px solid #5e5e5e"></div>
<span class="t12" style="left:1183px;top:546px;color:#727272;font-size:11px;letter-spacing:-0.3px">100%</span>
<div class="abs" style="left:1218px;top:544px;width:16px;height:17px;background:#4b4b4b;border:1px solid #5e5e5e"></div>
<svg style="left:1223px;top:551px" width="7" height="4" viewBox="0 0 7 4"><path d="M0.500 0.500L3.500 3.500 6.500 0.500" fill="none" stroke="#6a6a6a" stroke-width="1"/></svg>
<div class="abs" style="left:995px;top:566px;width:369px;height:1px;background:#4a4a4a"></div>
<!-- lock row -->
<span class="t12" style="left:1001px;top:574px;color:#8a8a8a;letter-spacing:0.6px" id="locktxt">锁定:</span>
<svg style="left:1038px;top:575px" width="12" height="12" viewBox="0 0 12 12"><rect x="0.500" y="0.500" width="11" height="11" fill="none" stroke="#b0b0b0" stroke-width="1"/><path d="M1 1h3.300v3.300H1zM7.600 1H11v3.300H7.600zM4.300 4.300h3.300v3.400H4.300zM1 7.700h3.300V11H1zM7.600 7.700H11V11H7.600z" fill="#b0b0b0"/></svg>
<svg style="left:1060px;top:574px" width="13" height="13" viewBox="0 0 13 13"><path d="M12.400 0.400c.5.400.4.900-.1 1.500L7.800 7.400 6 5.900 11 .9c.5-.6 1-.8 1.400-.5z" fill="#b0b0b0"/><path d="M5.300 6.800l1.600 1.400c.3 1.300-.5 2.800-1.900 3.400-1.500.6-3.200.6-4.800.3 1.100-.5 1.600-1.100 1.900-2.400.3-1.500 1.600-2.700 3.200-2.700z" fill="#b0b0b0"/></svg>
<svg style="left:1081px;top:574px" width="13" height="13" viewBox="0 0 13 13"><path d="M6.500 1v11M1 6.500h11" stroke="#b0b0b0" stroke-width="1.200" fill="none"/><path d="M6.500 0L4.200 2.800h4.600zM6.500 13L4.200 10.200h4.600zM0 6.500L2.800 4.200v4.600zM13 6.500L10.200 4.200v4.600z" fill="#b0b0b0"/></svg>
<svg style="left:1104px;top:574px" width="14" height="13" viewBox="0 0 14 13"><path d="M0 3.500h10.500v9.500" fill="none" stroke="#b0b0b0" stroke-width="1.200"/><path d="M3.500 0v10h10.500" fill="none" stroke="#b0b0b0" stroke-width="1.200"/><path d="M9 1.500h3.500M10.800 0v3.200" stroke="#b0b0b0" stroke-width="1"/></svg>
<svg style="left:1128px;top:574px" width="10" height="12" viewBox="0 0 10 12"><path d="M2.500 5.500V3.500a2.500 2.500 0 0 1 5 0v2" fill="none" stroke="#b0b0b0" stroke-width="1.400"/><rect x="0.500" y="5.500" width="9" height="6.500" rx="0.600" fill="#b0b0b0"/></svg>
<span class="t12" style="left:1147px;top:574px;color:#8a8a8a;letter-spacing:0.1px" id="filltxt">填充:</span>
<div class="abs" style="left:1180px;top:573px;width:39px;height:17px;background:#4b4b4b;border:1px solid #5e5e5e"></div>
<span class="t12" style="left:1183px;top:575px;color:#727272;font-size:11px;letter-spacing:-0.3px">100%</span>
<div class="abs" style="left:1218px;top:573px;width:16px;height:17px;background:#4b4b4b;border:1px solid #5e5e5e"></div>
<svg style="left:1223px;top:580px" width="7" height="4" viewBox="0 0 7 4"><path d="M0.500 0.500L3.500 3.500 6.500 0.500" fill="none" stroke="#6a6a6a" stroke-width="1"/></svg>
<!-- layer list -->
<div class="abs" style="left:995px;top:596px;width:369px;height:104px;background:#4f4f4f"></div>
<div class="abs" style="left:995px;top:597px;width:354px;height:40px;background:#535353"></div>
<div class="abs" style="left:995px;top:638px;width:354px;height:41px;background:#535353"></div>
<div class="abs" style="left:995px;top:637px;width:354px;height:1px;background:#464646"></div>
<div class="abs" style="left:995px;top:679px;width:354px;height:1px;background:#464646"></div>
<div class="abs" style="left:1024px;top:597px;width:1px;height:82px;background:#464646"></div>
<div class="abs" style="left:1349px;top:597px;width:15px;height:103px;background:#4a4a4a"></div>
<svg style="left:1003px;top:615px" width="14" height="9" viewBox="0 0 14 9"><path d="M0 4.500C2 1.500 4.500 0 7 0s5 1.500 7 4.500C12 7.500 9.500 9 7 9S2 7.500 0 4.500z" fill="#e0e0e0"/><circle cx="7" cy="4.300" r="2.500" fill="#535353"/><circle cx="7" cy="4.300" r="1.200" fill="#e0e0e0"/></svg>
<svg style="left:1003px;top:656px" width="14" height="9" viewBox="0 0 14 9"><path d="M0 4.500C2 1.500 4.500 0 7 0s5 1.500 7 4.500C12 7.500 9.500 9 7 9S2 7.500 0 4.500z" fill="#e0e0e0"/><circle cx="7" cy="4.300" r="2.500" fill="#535353"/><circle cx="7" cy="4.300" r="1.200" fill="#e0e0e0"/></svg>
<svg style="left:1029px;top:603px" width="24" height="32" viewBox="0 0 24 32"><rect x="0" y="0" width="24" height="32" fill="#1e1e1e"/><rect x="1" y="1" width="22" height="30" fill="#e8eca2"/><ellipse cx="12" cy="13.500" rx="7.600" ry="7.200" fill="#3a2a22"/><ellipse cx="5" cy="20" rx="2.200" ry="4" fill="#4a3226"/><ellipse cx="19" cy="20" rx="2.200" ry="4" fill="#4a3226"/><ellipse cx="12" cy="17.500" rx="6" ry="5.600" fill="#f7e9e0"/><path d="M6 15c1-4 4-5.500 6-5.500s5 1.500 6 5.500c-2-2.500-4-3-6-3s-4 .5-6 3z" fill="#3a2a22"/><circle cx="9" cy="18.500" r="2.300" fill="#e8d8d0" stroke="#222" stroke-width="0.700"/><circle cx="15" cy="18.500" r="2.300" fill="#e8d8d0" stroke="#222" stroke-width="0.700"/><circle cx="9" cy="18.700" r="1.100" fill="#5a4436"/><circle cx="15" cy="18.700" r="1.100" fill="#5a4436"/><path d="M6.500 31c0-4 2.500-6 5.500-6s5.500 2 5.500 6z" fill="#f4f4f4"/><rect x="9" y="28" width="6" height="3" fill="#2a2024"/><rect x="15.500" y="7.500" width="2.200" height="2.200" fill="#b22"/></svg>
<svg style="left:1029px;top:644px" width="24" height="32" viewBox="0 0 24 32"><rect x="0" y="0" width="24" height="32" fill="#1e1e1e"/><rect x="1" y="1" width="22" height="30" fill="#e8eca2"/><ellipse cx="12" cy="13.500" rx="7.600" ry="7.200" fill="#3a2a22"/><ellipse cx="5" cy="20" rx="2.200" ry="4" fill="#4a3226"/><ellipse cx="19" cy="20" rx="2.200" ry="4" fill="#4a3226"/><ellipse cx="12" cy="17.500" rx="6" ry="5.600" fill="#f7e9e0"/><path d="M6 15c1-4 4-5.500 6-5.500s5 1.500 6 5.500c-2-2.500-4-3-6-3s-4 .5-6 3z" fill="#3a2a22"/><circle cx="9" cy="18.500" r="2.300" fill="#e8d8d0" stroke="#222" stroke-width="0.700"/><circle cx="15" cy="18.500" r="2.300" fill="#e8d8d0" stroke="#222" stroke-width="0.700"/><circle cx="9" cy="18.700" r="1.100" fill="#5a4436"/><circle cx="15" cy="18.700" r="1.100" fill="#5a4436"/><path d="M6.500 31c0-4 2.500-6 5.500-6s5.500 2 5.500 6z" fill="#f4f4f4"/><rect x="9" y="28" width="6" height="3" fill="#2a2024"/><rect x="15.500" y="7.500" width="2.200" height="2.200" fill="#b22"/></svg>
<span class="t12" style="left:1062px;top:612px;color:#f0f0f0" id="l1txt">图层 1</span>
<span class="t12" style="left:1062px;top:653px;color:#f0f0f0">背景</span>
<svg style="left:1323px;top:654px" width="11" height="12" viewBox="0 0 11 12"><path d="M3 5.500V3.500a2.500 2.500 0 0 1 5 0v2" fill="none" stroke="#d0d0d0" stroke-width="1.200"/><rect x="1" y="5.500" width="9" height="6" fill="none" stroke="#d0d0d0" stroke-width="1.200"/><rect x="4.800" y="7.500" width="1.400" height="2.200" fill="#d0d0d0"/></svg>
<!-- footer -->
<div class="abs" style="left:995px;top:700px;width:369px;height:1px;background:#484848"></div>
<svg style="left:1162px;top:708px" width="16" height="9" viewBox="0 0 16 9"><rect x="0.700" y="1.200" width="8" height="6.600" rx="3.300" fill="none" stroke="#8a8a8a" stroke-width="1.400"/><rect x="7.300" y="1.200" width="8" height="6.600" rx="3.300" fill="none" stroke="#8a8a8a" stroke-width="1.400"/><path d="M5 4.500h6" stroke="#8a8a8a" stroke-width="1.400"/></svg>
<span class="abs" style="left:1191px;top:704px;font-style:italic;font-size:14px;line-height:16px;color:#929292;font-family:'Liberation Sans',sans-serif;font-weight:normal;letter-spacing:-0.5px">fx</span>
<svg style="left:1216px;top:707px" width="14" height="11" viewBox="0 0 14 11"><rect x="0" y="0" width="14" height="11" fill="#969696"/><circle cx="7" cy="5.500" r="3.200" fill="#535353"/></svg>
<svg style="left:1245px;top:706px" width="13" height="13" viewBox="0 0 13 13"><circle cx="6.500" cy="6.500" r="5.600" fill="none" stroke="#d8d8d8" stroke-width="1.400"/><path d="M2.500 10.500A5.600 5.600 0 0 0 10.500 2.500z" fill="#d8d8d8"/></svg>
<svg style="left:1255px;top:719px" width="5" height="3" viewBox="0 0 5 3"><path d="M0 0h5L2.500 3z" fill="#d8d8d8"/></svg>
<svg style="left:1271px;top:706px" width="14" height="12" viewBox="0 0 14 12"><path d="M0 1.200h5l1.500 1.800H14V12H0z" fill="#d8d8d8"/></svg>
<svg style="left:1299px;top:707px" width="11" height="12" viewBox="0 0 11 12"><path d="M10.300 0.700H0.700v6.800L4.200 11.300h6.100z" fill="none" stroke="#d8d8d8" stroke-width="1.400"/><path d="M0.700 7.500H4.200v3.800z" fill="#d8d8d8" stroke="#d8d8d8" stroke-width="1"/></svg>
<svg style="left:1326px;top:706px" width="11" height="13" viewBox="0 0 11 13"><path d="M0 2.500h11" stroke="#8a8a8a" stroke-width="1.400"/><path d="M3.500 2V0.600h4V2" fill="none" stroke="#8a8a8a" stroke-width="1.200"/><path d="M1.200 4h8.600l-.6 9H1.800z" fill="none" stroke="#8a8a8a" stroke-width="1.100"/><path d="M3.800 5.500v6M5.500 5.500v6M7.200 5.500v6" stroke="#8a8a8a" stroke-width="0.900"/></svg>


</body>
</html>
